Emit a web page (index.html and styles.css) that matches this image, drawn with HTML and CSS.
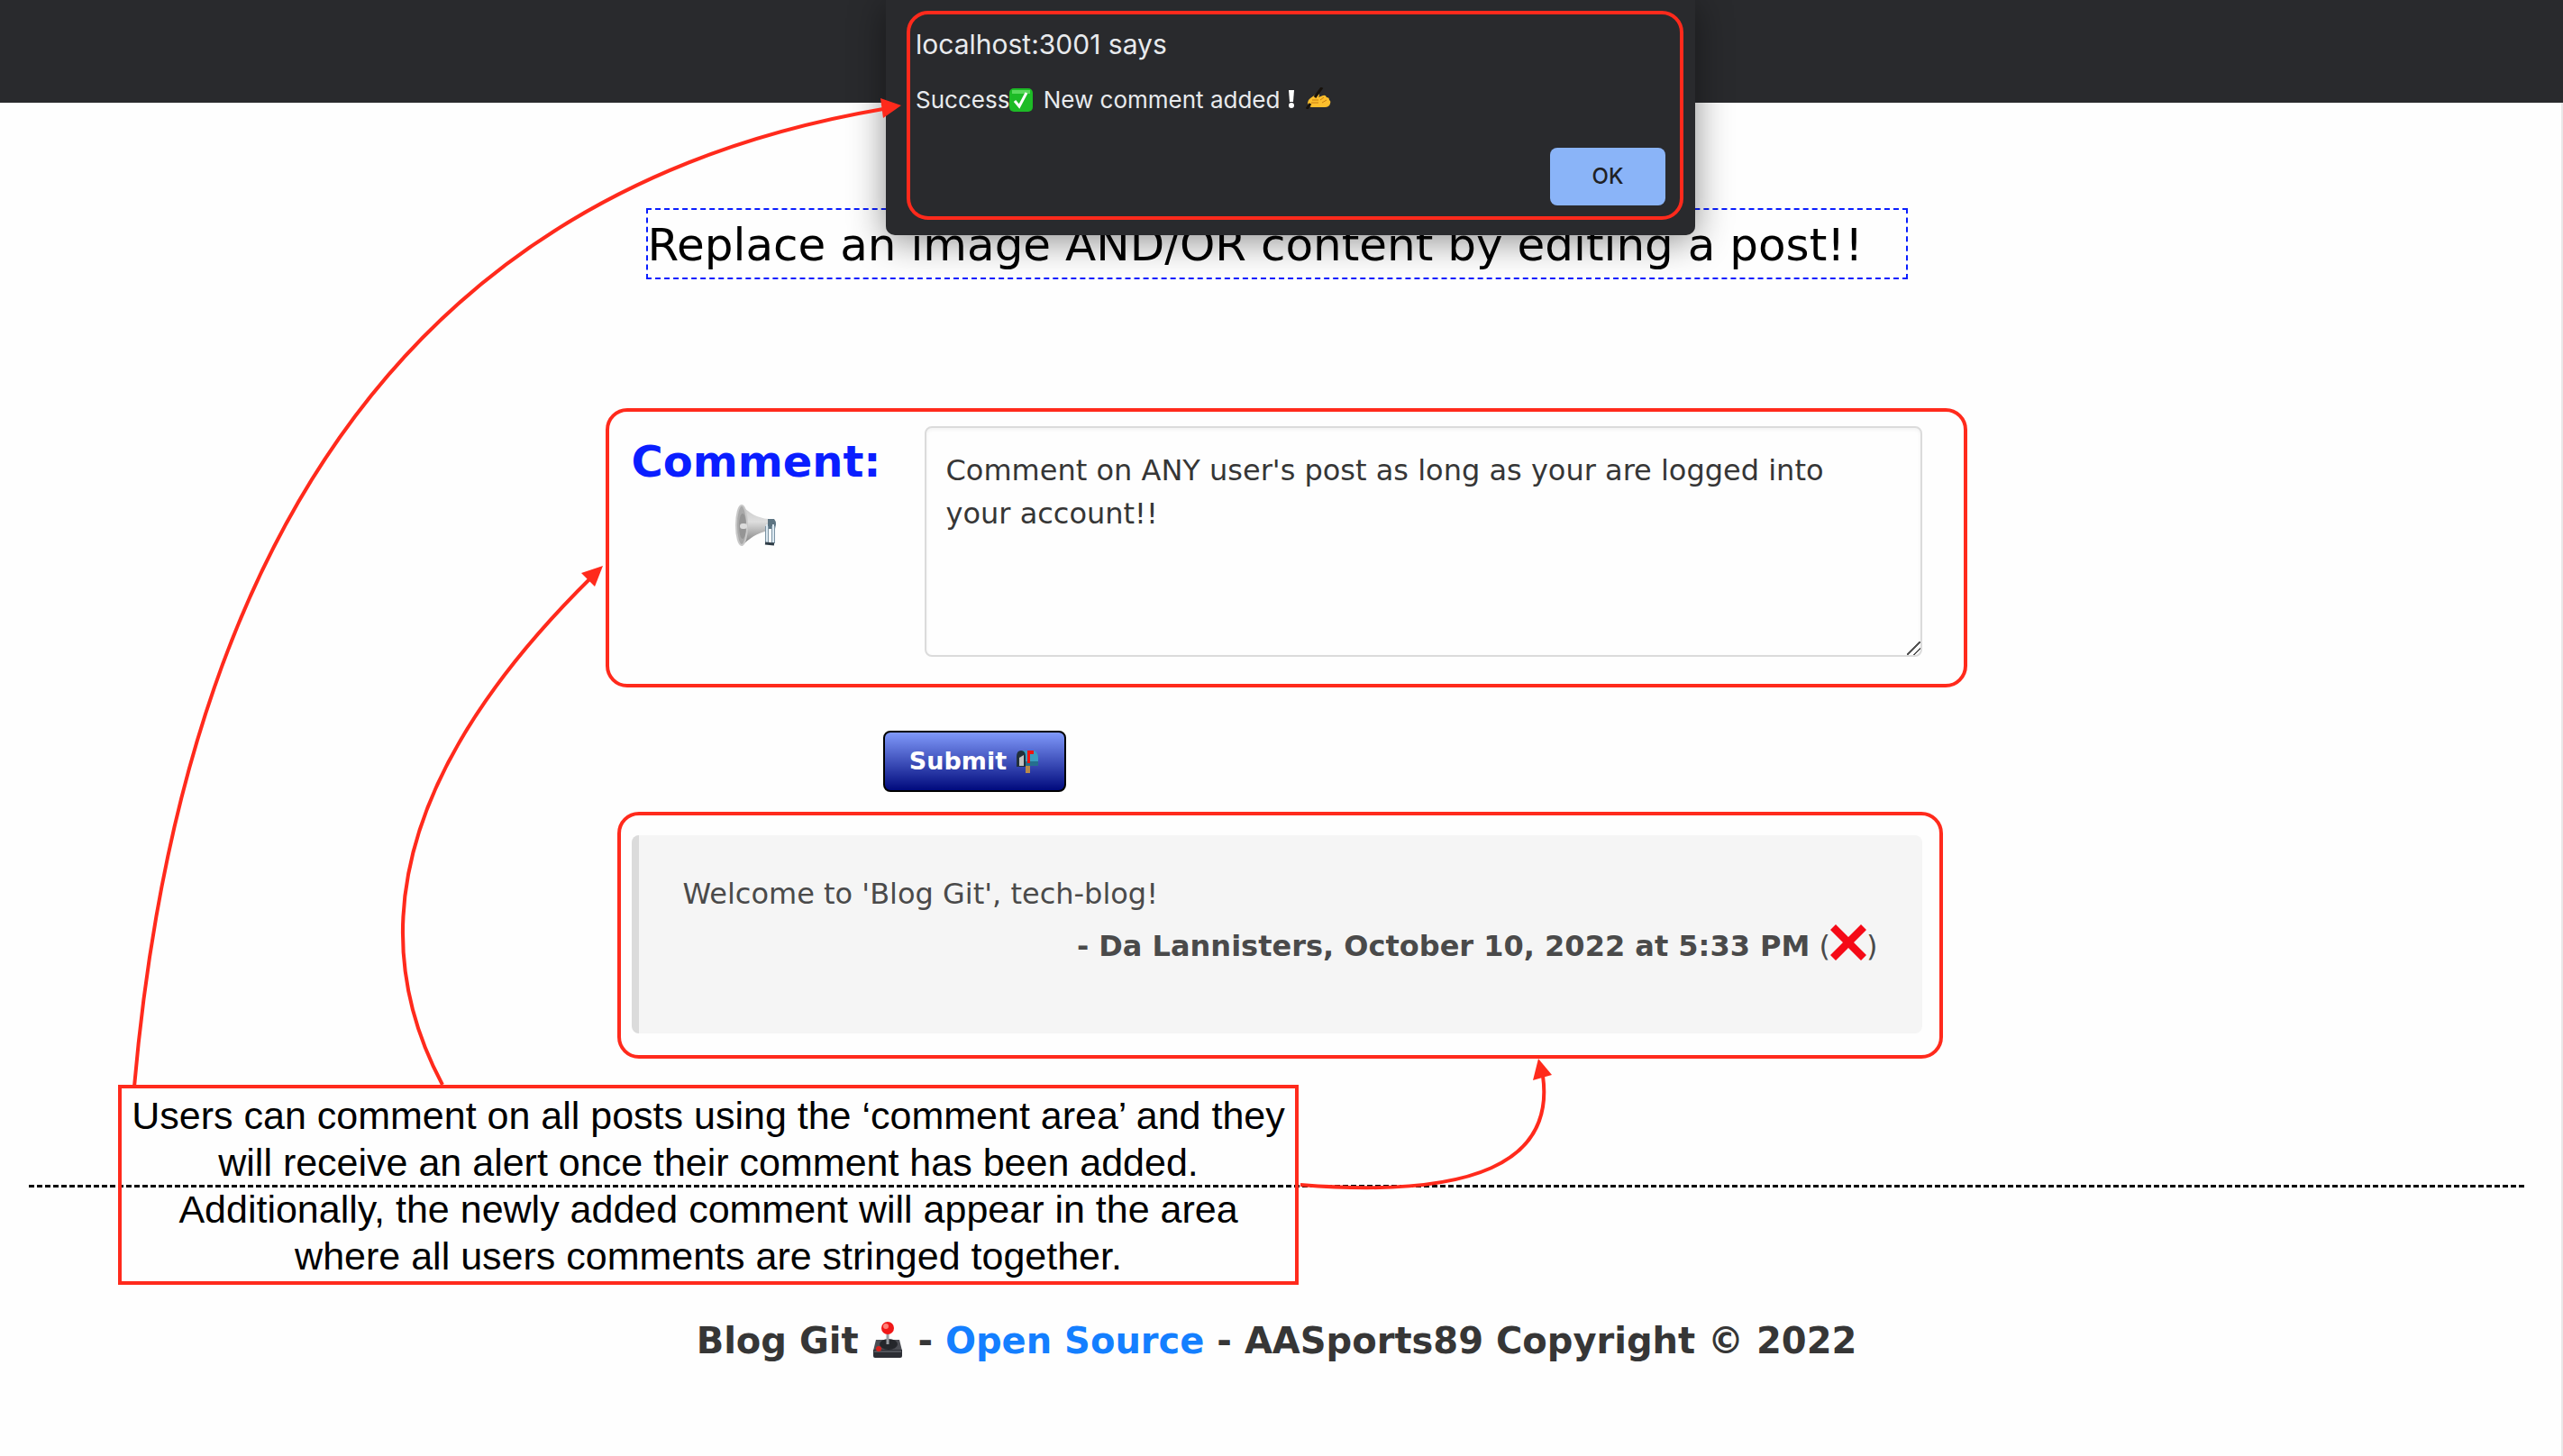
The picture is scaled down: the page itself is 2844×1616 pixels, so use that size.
FILE: index.html
```html
<!DOCTYPE html>
<html lang="en">
<head>
<meta charset="utf-8">
<meta name="viewport" content="width=device-width, initial-scale=1">
<title>Blog Git</title>
<link rel="stylesheet" href="styles.css">
</head>
<body>
<header class="navbar"></header>

<main class="page">
  <div class="column">
    <h1 class="post-content">Replace an image AND/OR content by editing a post!!</h1>

    <form class="comment-form">
      <div class="field marked marked-form">
        <label class="field-label" for="comment">Comment:
          <svg class="megaphone" viewBox="0 0 46 46" aria-hidden="true">
            <defs>
              <linearGradient id="horn" x1="0" y1="0" x2="0" y2="1"><stop offset="0" stop-color="#c9c9c9"/><stop offset=".4" stop-color="#dedede"/><stop offset="1" stop-color="#777"/></linearGradient>
            </defs>
            <path d="M7 1c8 8 17 14 30 15v13C24 31 15 38 7 46z" fill="url(#horn)"/>
            <path d="M36 16h7q2 2 2 6l-1 5h-8z" fill="#5d7482"/>
            <path d="M35 24v18M42 24v19" stroke="#7b93a3" stroke-width="4"/>
            <path d="M35 22v20M42 22v20" stroke="#dce9f2" stroke-width="2"/>
            <path d="M33 43l10 1" stroke="#2f3d47" stroke-width="3"/>
            <ellipse cx="7" cy="23" rx="6" ry="22" fill="#a9a9a9" stroke="#c8c8c8" stroke-width="2"/>
            <ellipse cx="8" cy="24" rx="4" ry="14" fill="#959595"/>
            <rect x="5" y="21" width="8" height="6" rx="3" fill="#dcdcdc"/>
          </svg>
        </label>
        <textarea class="textarea" id="comment">Comment on ANY user's post as long as your are logged into your account!!</textarea>
      </div>
      <button class="submit" type="button">Submit
        <svg class="mailbox" viewBox="0 0 26 26" aria-hidden="true">
          <path d="M11 17h5v9h-5z" fill="#b98a4b"/>
          <path d="M6 1h14q5 2 5 8v9H8z" fill="#3b9cc0"/>
          <path d="M8 13h17v5H8z" fill="#256f8e"/>
          <path d="M1 19V8q0-7 5-7t5 7v11z" fill="#22303a"/>
          <path d="M4 18V9l5-3v12z" fill="#c2c2c2"/>
          <path d="M13 1h7v4h-4v10h-3z" fill="#f0140f"/>
        </svg>
      </button>
    </form>

    <article class="comment marked marked-comment">
      <p class="comment-text">Welcome to 'Blog Git', tech-blog!</p>
      <p class="comment-meta"><strong>- Da Lannisters, October 10, 2022 at 5:33 PM</strong> (<button class="delete" type="button" aria-label="Delete comment"><svg class="cross" viewBox="0 0 40 40" aria-hidden="true"><path d="M6 0l14 14L34 0l6 6-14 14 14 14-6 6-14-14L6 40l-6-6 14-14L0 6z" fill="#f50a17"/></svg></button>)</p>
    </article>
  </div>

  <hr class="divider">

  <footer class="footer">
    <p>Blog Git
      <svg class="joystick" viewBox="0 0 32 40" aria-hidden="true">
        <path d="M3 20h26l3 12H0z" fill="#4b4d54"/>
        <path d="M0 31h32v7q0 2-2 2H2q-2 0-2-2z" fill="#2c2e34"/>
        <path d="M1 33h30" stroke="#777a82" stroke-width="1"/>
        <ellipse cx="17" cy="25" rx="10" ry="6" fill="#24262b"/>
        <path d="M16 12v13" stroke="#999ca3" stroke-width="3"/>
        <circle cx="16" cy="7" r="7" fill="#f01818"/>
        <circle cx="14" cy="5" r="3" fill="#ff8078"/>
        <circle cx="6" cy="30" r="3" fill="#d8211d"/>
      </svg>
      - <a class="link" href="#">Open Source</a> - AASports89 Copyright © 2022</p>
  </footer>
</main>

<div class="dialog" role="alertdialog" aria-labelledby="dialog-title">
  <div class="dialog-body">
    <h2 class="dialog-title" id="dialog-title">localhost:3001 says</h2>
    <p class="dialog-text">Success<svg class="check" viewBox="0 0 26 26" aria-hidden="true"><rect width="26" height="26" rx="5" fill="#1dbb26"/><path d="M3 2h20v4H3z" fill="#5ada5c"/><path d="M6 14l5 6 8-15" fill="none" stroke="#fff" stroke-width="3"/></svg> New comment added&nbsp;<svg class="bang" viewBox="0 0 10 20" aria-hidden="true"><path d="M2 0h6L7 13H3z" fill="#fff"/><circle cx="5" cy="17" r="3" fill="#fff"/></svg>&nbsp;<svg class="hand" viewBox="0 0 28 24" aria-hidden="true"><path d="M2 17q0-3 3-5l7-5q3-1 3 2l-1 2 5-2q3-1 4 2 3 0 3 3 2 1 1 4-1 4-6 4H7q-4 0-5-5z" fill="#fcbf2d"/><path d="M6 17h8M7 14h7M20 11l-4 3M23 14l-5 3" stroke="#c87e12" stroke-width="1"/><path d="M1 24L5 18M10 11L18 0" stroke="#17120c" stroke-width="3"/></svg></p>
    <button class="ok" type="button">OK</button>
  </div>
</div>

<svg class="arrows" viewBox="0 0 2844 1616" aria-hidden="true">
  <g fill="none" stroke="#ff2a1c" stroke-width="4">
    <path d="M149 1206Q233 248 980 121"/>
    <path d="M491 1204Q351 942 656 641"/>
    <path d="M1443 1315Q1732 1338 1712 1194"/>
  </g>
  <g fill="#ff2a1c">
    <path d="M1000 117L977 109L980 131z"/>
    <path d="M669 628L645 636L660 651z"/>
    <path d="M1707 1175L1701 1199L1722 1193z"/>
  </g>
</svg>

<p class="callout">Users can comment on all posts using the ‘comment area’ and they will receive an alert once their comment has been added. Additionally, the newly added comment will appear in the area where all users comments are stringed together.</p>
</body>
</html>
```
FILE: styles.css
```css
* {
  box-sizing: border-box;
}

body {
  position: relative;
  display: flex;
  flex-direction: column;
  min-height: 100vh;
  margin: 0;
  background: #fefefe;
  color: #363636;
  font-family: Verdana, "DejaVu Sans", sans-serif;
  font-size: 32px;
  line-height: 48px;
}

h1,
h2,
p {
  margin: 0;
}

svg {
  display: inline-block;
}

.navbar {
  height: 114px;
  background: #292a2d;
}

.page {
  flex: 1;
  padding: 117px 41px 0 32px;
  border-right: 2px solid #e8e8e8;
}

.column {
  max-width: 1432px;
  margin: 0 auto;
}

.post-content {
  max-width: 1400px;
  margin: 0 auto;
  padding-top: 3px;
  border: 2px dashed #0a1eff;
  color: #000;
  font-size: 50px;
  font-weight: 400;
  line-height: 72px;
  white-space: nowrap;
}

.comment-form {
  margin-top: 163px;
}

.marked {
  position: relative;
}

.marked::after {
  content: "";
  position: absolute;
  border: 4px solid #ff2a1c;
  border-radius: 24px;
  pointer-events: none;
}

.marked-form::after {
  inset: -20px -50px -34px -29px;
}

.field {
  display: grid;
  grid-template-columns: 325px 1fr;
}

.field-label {
  display: flex;
  flex-direction: column;
  align-items: center;
  gap: 12px;
  width: 277px;
  padding-top: 3px;
  color: #0a1eff;
  font-size: 48px;
  font-weight: 700;
  line-height: 72px;
}

.megaphone {
  width: 46px;
  height: 46px;
}

.textarea {
  display: block;
  width: 100%;
  height: 256px;
  padding: 23px 48px 22px 22px;
  border: 2px solid #dbdbdb;
  border-radius: 8px;
  background: #fefefe;
  box-shadow: inset 0 2px 4px rgba(10, 10, 10, 0.05);
  color: #363636;
  font: inherit;
  resize: both;
}

.textarea::-webkit-resizer {
  background: linear-gradient(135deg, transparent 46%, #555 46%, #555 54%, transparent 54%, transparent 71%, #555 71%, #555 79%, transparent 79%);
}

.submit {
  display: flex;
  align-items: center;
  justify-content: center;
  gap: 10px;
  width: 203px;
  height: 68px;
  margin: 82px 0 0 279px;
  padding: 0;
  border: 2px solid #000;
  border-radius: 8px;
  background: linear-gradient(#8099fa, #000a7d);
  color: #fff;
  font: inherit;
  font-size: 27px;
  font-weight: 700;
}

.mailbox {
  width: 26px;
  height: 26px;
}

.comment {
  min-height: 220px;
  margin-top: 48px;
  padding: 41px 49px 0;
  border-left: 8px solid #dbdbdb;
  border-radius: 8px;
  background: #f5f5f5;
  color: #4a4a4a;
}

.marked-comment::after {
  inset: -26px -23px -28px -24px;
}

.comment-meta {
  margin-top: 10px;
  text-align: right;
}

.delete {
  padding: 0;
  border: 0;
  background: none;
  line-height: 0;
}

.cross {
  width: 40px;
  height: 40px;
  vertical-align: -5px;
}

.divider {
  margin: 168px 0 0;
  border: 0;
  border-top: 3px dashed #000;
}

.footer {
  padding: 140px 0 84px;
  font-size: 40px;
  font-weight: 700;
  line-height: 60px;
  text-align: center;
}

.joystick {
  width: 32px;
  height: 40px;
  margin: 0 3px;
  vertical-align: -5px;
}

.link {
  color: #147fff;
  text-decoration: none;
}

.dialog {
  position: absolute;
  top: 0;
  left: 983px;
  width: 898px;
  height: 261px;
  padding: 12px 13px 17px 23px;
  border-radius: 0 0 10px 10px;
  background: #292a2d;
  box-shadow: 0 6px 40px rgba(0, 0, 0, 0.45);
  color: #e8eaed;
  font-family: Inter, sans-serif;
}

.dialog-body {
  display: flex;
  flex-direction: column;
  height: 232px;
  padding: 13px 16px 12px 6px;
  border: 4px solid #ff2a1c;
  border-radius: 24px;
}

.dialog-title {
  font-size: 30px;
  font-weight: 400;
  line-height: 40px;
}

.dialog-text {
  margin-top: 22px;
  font-size: 26px;
  line-height: 40px;
}

.check {
  width: 26px;
  height: 26px;
  margin-right: 4px;
  vertical-align: -4px;
}

.bang {
  width: 10px;
  height: 20px;
}

.hand {
  width: 28px;
  height: 24px;
  margin-left: 4px;
  vertical-align: -1px;
}

.ok {
  align-self: flex-end;
  width: 128px;
  height: 64px;
  margin-top: auto;
  padding: 0;
  border: 0;
  border-radius: 8px;
  background: #8ab4f8;
  color: #202124;
  font: inherit;
  font-size: 24px;
  font-weight: 500;
}

.arrows {
  position: absolute;
  top: 0;
  left: 0;
  width: 100%;
  pointer-events: none;
}

.callout {
  position: absolute;
  top: 1204px;
  left: 131px;
  width: 1310px;
  padding: 4px 0 2px;
  border: 4px solid #ff2a1c;
  color: #000;
  font-family: Helvetica, "Liberation Sans", sans-serif;
  font-size: 43px;
  line-height: 52px;
  text-align: center;
}
```
